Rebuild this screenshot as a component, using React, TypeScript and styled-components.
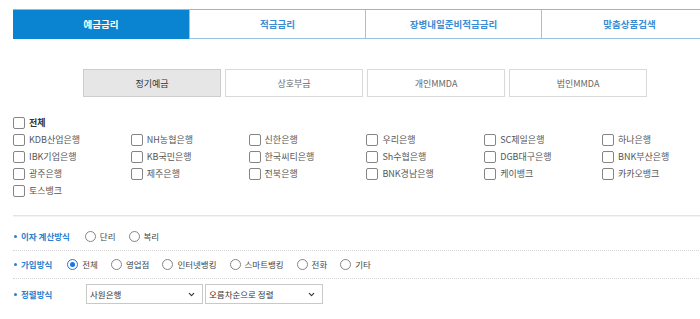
import React from 'react'
import styled, { createGlobalStyle } from 'styled-components'
import { ChevronDown } from 'lucide-react'

const GlobalStyle = createGlobalStyle`
  html, body {
    margin: 0;
    padding: 0;
    overflow: hidden;
    background: #fff;
  }
  body {
    font-family: "Noto Sans CJK KR", "Noto Sans", sans-serif;
    font-size: 9px;
    color: #555;
  }
`

const Page = styled.div`
  width: 704px;
  margin-left: 13px;
  padding-top: 9px;
`

const TabBar = styled.ul`
  display: flex;
  list-style: none;
  margin: 0;
  padding: 0;
  border-top: 1px solid #a3b3c6;
`

const Tab = styled.li<{ $active?: boolean }>`
  flex: 0 0 176px;
  box-sizing: border-box;
  height: 29px;
  display: flex;
  align-items: center;
  justify-content: center;
  font-size: 9.5px;
  font-weight: 700;
  background: ${(p) => (p.$active ? '#0a84d0' : '#fff')};
  color: ${(p) => (p.$active ? '#fff' : '#3a8dd4')};
  border-bottom: 1px solid ${(p) => (p.$active ? '#0a84d0' : '#94c4ea')};
  & + & {
    border-left: 1px solid #94c4ea;
  }
`

const SubTabs = styled.div`
  display: flex;
  justify-content: center;
  gap: 4px;
  margin-top: 30px;
`

const SubTab = styled.button<{ $active?: boolean }>`
  width: 138px;
  height: 28px;
  padding: 0;
  font: inherit;
  font-size: 9px;
  border: 1px solid ${(p) => (p.$active ? '#cdcdcd' : '#d9d9d9')};
  background: ${(p) => (p.$active ? '#e6e6e6' : '#fff')};
  color: ${(p) => (p.$active ? '#333' : '#666')};
`

const BankGrid = styled.div`
  display: grid;
  grid-template-columns: repeat(6, 117.8px);
  grid-auto-rows: 17px;
  margin-top: 17px;
`

const CheckItem = styled.label<{ $full?: boolean; $strong?: boolean }>`
  display: flex;
  align-items: center;
  gap: 4px;
  white-space: nowrap;
  grid-column: ${(p) => (p.$full ? '1 / -1' : 'auto')};
  color: ${(p) => (p.$strong ? '#333' : '#555')};
  font-weight: ${(p) => (p.$strong ? 700 : 400)};
`

const Box = styled.span`
  width: 10px;
  height: 10px;
  border: 1px solid #858585;
  border-radius: 2px;
  background: #fff;
  flex: none;
`

const Divider = styled.div`
  margin-top: 16px;
  border-top: 1px solid #e4e4e4;
  box-shadow: 0 1px 0 #f4f4f4;
`

const OptionRow = styled.div<{ $pt: number; $pb: number; $dotted?: boolean }>`
  display: flex;
  align-items: center;
  padding: ${(p) => `${p.$pt}px 0 ${p.$pb}px`};
  border-bottom: ${(p) => (p.$dotted ? '1px dotted #d6d6d6' : 'none')};
`

const OptionTitle = styled.span<{ $width?: number }>`
  position: relative;
  padding-left: 7px;
  margin-left: 1px;
  margin-right: 15px;
  min-width: ${(p) => (p.$width ? `${p.$width}px` : 'auto')};
  color: #2a7fd0;
  font-weight: 700;
  font-size: 8.5px;
  white-space: nowrap;
  &::before {
    content: '';
    position: absolute;
    left: 0;
    top: 50%;
    width: 3px;
    height: 3px;
    margin-top: -1px;
    border-radius: 50%;
    background: #2a7fd0;
  }
`

const RadioItem = styled.label`
  display: flex;
  align-items: center;
  gap: 4px;
  margin-right: 13px;
  font-size: 8.5px;
  color: #444;
  white-space: nowrap;
`

const RadioDot = styled.span<{ $checked?: boolean }>`
  box-sizing: border-box;
  width: 11px;
  height: 11px;
  border-radius: 50%;
  border: 1px solid ${(p) => (p.$checked ? '#1a73e8' : '#858585')};
  background: #fff;
  display: flex;
  align-items: center;
  justify-content: center;
  &::after {
    content: '';
    display: ${(p) => (p.$checked ? 'block' : 'none')};
    width: 5px;
    height: 5px;
    border-radius: 50%;
    background: #1a73e8;
  }
`

const SelectBox = styled.div<{ $width: number }>`
  position: relative;
  box-sizing: border-box;
  width: ${(p) => p.$width}px;
  height: 20px;
  margin-right: 2px;
  border: 1px solid #c9c9c9;
  display: flex;
  align-items: center;
  padding-left: 3px;
  font-size: 8.5px;
  color: #333;
  background: #fff;
  svg {
    position: absolute;
    right: 6px;
    top: 5px;
  }
`

const banks = [
  'KDB산업은행', 'NH농협은행', '신한은행', '우리은행', 'SC제일은행', '하나은행',
  'IBK기업은행', 'KB국민은행', '한국씨티은행', 'Sh수협은행', 'DGB대구은행', 'BNK부산은행',
  '광주은행', '제주은행', '전북은행', 'BNK경남은행', '케이뱅크', '카카오뱅크',
  '토스뱅크',
]

const joinTypes = ['전체', '영업점', '인터넷뱅킹', '스마트뱅킹', '전화', '기타']

export default function App() {
  return (
    <>
      <GlobalStyle />
      <Page>
        <TabBar>
          <Tab $active>예금금리</Tab>
          <Tab>적금금리</Tab>
          <Tab>장병내일준비적금금리</Tab>
          <Tab>맞춤상품검색</Tab>
        </TabBar>

        <SubTabs>
          <SubTab $active>정기예금</SubTab>
          <SubTab>상호부금</SubTab>
          <SubTab>개인MMDA</SubTab>
          <SubTab>법인MMDA</SubTab>
        </SubTabs>

        <BankGrid>
          <CheckItem $full $strong>
            <Box />
            전체
          </CheckItem>
          {banks.map((b) => (
            <CheckItem key={b}>
              <Box />
              {b}
            </CheckItem>
          ))}
        </BankGrid>

        <Divider />

        <OptionRow $pt={14} $pb={8} $dotted>
          <OptionTitle>이자 계산방식</OptionTitle>
          <RadioItem>
            <RadioDot />
            단리
          </RadioItem>
          <RadioItem>
            <RadioDot />
            복리
          </RadioItem>
        </OptionRow>

        <OptionRow $pt={7} $pb={8} $dotted>
          <OptionTitle>가입방식</OptionTitle>
          {joinTypes.map((t, i) => (
            <RadioItem key={t}>
              <RadioDot $checked={i === 0} />
              {t}
            </RadioItem>
          ))}
        </OptionRow>

        <OptionRow $pt={5} $pb={5}>
          <OptionTitle $width={50}>정렬방식</OptionTitle>
          <SelectBox $width={117}>
            사원은행
            <ChevronDown size={9} strokeWidth={3} color="#333" />
          </SelectBox>
          <SelectBox $width={118}>
            오름차순으로 정렬
            <ChevronDown size={9} strokeWidth={3} color="#333" />
          </SelectBox>
        </OptionRow>
      </Page>
    </>
  )
}
